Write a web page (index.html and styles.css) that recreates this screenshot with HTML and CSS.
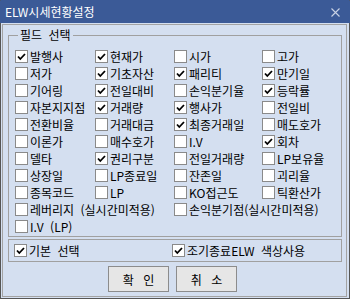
FILE: index.html
```html
<!DOCTYPE html>
<html lang="ko">
<head>
    <meta charset="UTF-8">
    <meta name="viewport" content="width=device-width, initial-scale=1.0">
    <title>ELW시세현황설정</title>
    <link rel="stylesheet" href="styles.css">
</head>
<body>

    <div class="window">
        <div class="titlebar">
            <span class="title">ELW시세현황설정</span>
            <svg class="close" width="9" height="9" viewBox="0 0 9 9">
                <path d="M0.5 0.5 L8.5 8.5 M8.5 0.5 L0.5 8.5" stroke="#c9d2e4" stroke-width="1.1" fill="none"/>
            </svg>
        </div>

        <div class="frame">
            <fieldset class="group">
                <legend>필드 선택</legend>
                <div class="fields">
                    <label class="item"><span class="box on"><svg viewBox="0 0 11 11"><path d="M2 5.5 L4.3 8 L9 3"/></svg></span>발행사</label>
                    <label class="item"><span class="box on"><svg viewBox="0 0 11 11"><path d="M2 5.5 L4.3 8 L9 3"/></svg></span>현재가</label>
                    <label class="item"><span class="box"></span>시가</label>
                    <label class="item"><span class="box"></span>고가</label>

                    <label class="item"><span class="box"></span>저가</label>
                    <label class="item"><span class="box on"><svg viewBox="0 0 11 11"><path d="M2 5.5 L4.3 8 L9 3"/></svg></span>기초자산</label>
                    <label class="item"><span class="box on"><svg viewBox="0 0 11 11"><path d="M2 5.5 L4.3 8 L9 3"/></svg></span>패리티</label>
                    <label class="item"><span class="box on"><svg viewBox="0 0 11 11"><path d="M2 5.5 L4.3 8 L9 3"/></svg></span>만기일</label>

                    <label class="item"><span class="box"></span>기어링</label>
                    <label class="item"><span class="box on"><svg viewBox="0 0 11 11"><path d="M2 5.5 L4.3 8 L9 3"/></svg></span>전일대비</label>
                    <label class="item"><span class="box"></span>손익분기율</label>
                    <label class="item"><span class="box on"><svg viewBox="0 0 11 11"><path d="M2 5.5 L4.3 8 L9 3"/></svg></span>등락률</label>

                    <label class="item"><span class="box"></span>자본지지점</label>
                    <label class="item"><span class="box on"><svg viewBox="0 0 11 11"><path d="M2 5.5 L4.3 8 L9 3"/></svg></span>거래량</label>
                    <label class="item"><span class="box on"><svg viewBox="0 0 11 11"><path d="M2 5.5 L4.3 8 L9 3"/></svg></span>행사가</label>
                    <label class="item"><span class="box"></span>전일비</label>

                    <label class="item"><span class="box"></span>전환비율</label>
                    <label class="item"><span class="box"></span>거래대금</label>
                    <label class="item"><span class="box on"><svg viewBox="0 0 11 11"><path d="M2 5.5 L4.3 8 L9 3"/></svg></span>최종거래일</label>
                    <label class="item"><span class="box"></span>매도호가</label>

                    <label class="item"><span class="box"></span>이론가</label>
                    <label class="item"><span class="box"></span>매수호가</label>
                    <label class="item"><span class="box"></span>I.V</label>
                    <label class="item"><span class="box on"><svg viewBox="0 0 11 11"><path d="M2 5.5 L4.3 8 L9 3"/></svg></span>회차</label>

                    <label class="item"><span class="box"></span>델타</label>
                    <label class="item"><span class="box on"><svg viewBox="0 0 11 11"><path d="M2 5.5 L4.3 8 L9 3"/></svg></span>권리구분</label>
                    <label class="item"><span class="box"></span>전일거래량</label>
                    <label class="item"><span class="box"></span>LP보유율</label>

                    <label class="item"><span class="box"></span>상장일</label>
                    <label class="item"><span class="box"></span>LP종료일</label>
                    <label class="item"><span class="box"></span>잔존일</label>
                    <label class="item"><span class="box"></span>괴리율</label>

                    <label class="item"><span class="box"></span>종목코드</label>
                    <label class="item"><span class="box"></span>LP</label>
                    <label class="item"><span class="box"></span>KO접근도</label>
                    <label class="item"><span class="box"></span>틱환산가</label>

                    <label class="item wide"><span class="box"></span>레버리지 (실시간미적용)</label>
                    <label class="item wide"><span class="box"></span>손익분기점(실시간미적용)</label>

                    <label class="item wide"><span class="box"></span>I.V (LP)</label>
                </div>
            </fieldset>

            <div class="options">
                <label class="item"><span class="box on"><svg viewBox="0 0 11 11"><path d="M2 5.5 L4.3 8 L9 3"/></svg></span>기본 선택</label>
                <label class="item"><span class="box on"><svg viewBox="0 0 11 11"><path d="M2 5.5 L4.3 8 L9 3"/></svg></span>조기종료ELW 색상사용</label>
            </div>

            <div class="buttons">
                <button class="btn">확 인</button>
                <button class="btn">취 소</button>
            </div>
        </div>
    </div>

</body>
</html>
```

FILE: styles.css
```css
body {
    margin: 0;
    background: #d4dff0;
    font-family: "Noto Sans CJK KR", "DejaVu Sans", sans-serif;
    font-size: 12px;
    word-spacing: 3px;
    color: #000;
}
.window {
    width: 350px;
    height: 299px;
    box-sizing: border-box;
    border: 1px solid #555;
    border-top-color: #3b5a97;
    background: #d4dff0;
}
.titlebar {
    height: 22px;
    margin: 0 -1px;
    background: #3b5a97;
    color: #fff;
    display: flex;
    align-items: center;
    justify-content: space-between;
    padding: 0 10px 0 5px;
}
.title {
    line-height: 22px;
}
.frame {
    margin: 1px 2px 1px 1px;
    height: 271px;
    border: 1px solid #a3a3a3;
    padding: 0 4px 0 5px;
}
.group {
    margin: 3px 0 0 0;
    padding: 6px 0 1px 6px;
    border: 1px solid #a0a0a0;
}
.group legend {
    margin-left: 3px;
    padding: 0 2px;
    line-height: 14px;
}
.fields {
    display: grid;
    grid-template-columns: 80px 79px 88px 1fr;
    grid-auto-rows: 17px;
}
.item {
    display: flex;
    align-items: center;
    gap: 2px;
    white-space: nowrap;
    line-height: 17px;
}
.wide {
    grid-column: span 2;
}
.box {
    width: 11px;
    height: 11px;
    border: 1px solid #8a8a8a;
    background: #fff;
    flex: none;
}
.box svg {
    display: block;
    width: 11px;
    height: 11px;
}
.box path {
    fill: none;
    stroke: #000;
    stroke-width: 1.8;
}
.options {
    margin-top: 2px;
    height: 21px;
    border: 1px solid #a0a0a0;
    display: grid;
    grid-template-columns: 158px 1fr;
    align-items: center;
    padding-left: 5px;
}
.buttons {
    display: flex;
    gap: 7px;
    padding-left: 100px;
    margin-top: 4px;
}
.btn {
    width: 61px;
    height: 26px;
    background: #e6e6e6;
    border: 1px solid #8c8c8c;
    font-family: inherit;
    font-size: 12px;
    word-spacing: 6px;
    padding: 0;
}
```
